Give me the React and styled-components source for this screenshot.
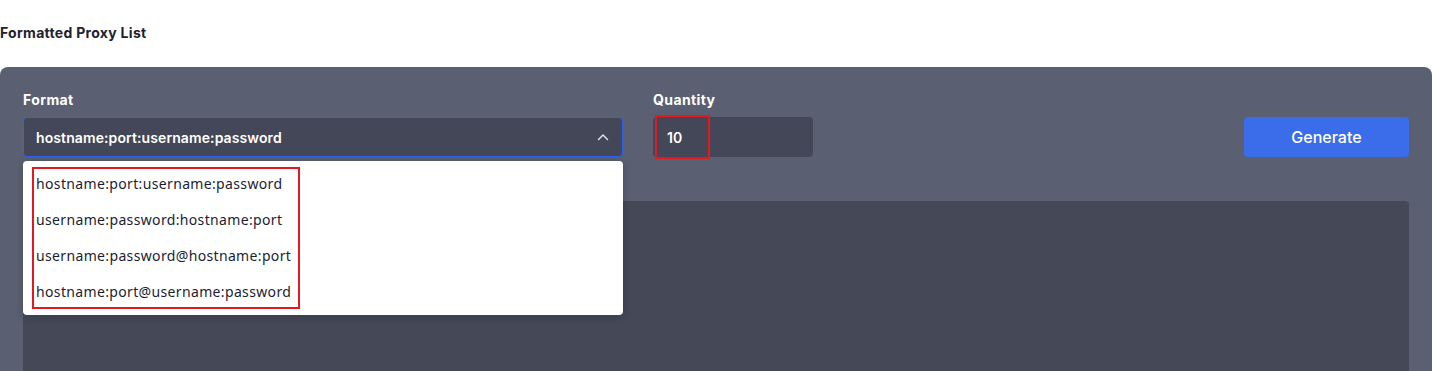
import React from 'react'
import styled, { createGlobalStyle } from 'styled-components'

const GlobalStyle = createGlobalStyle`
  html, body {
    margin: 0;
    padding: 0;
    background: #ffffff;
    font-family: Inter, "Noto Sans", sans-serif;
  }
`

const Page = styled.div`
  width: 1432px;
  height: 371px;
  overflow: hidden;
`

const PageTitle = styled.h2`
  margin: 0;
  padding: 24px 0 0 0;
  height: 67px;
  box-sizing: border-box;
  font-size: 14px;
  font-weight: 700;
  color: #1d2230;
  letter-spacing: 0.3px;
`

const Panel = styled.div`
  background: #5a5f71;
  border-radius: 8px;
  padding: 24px 23px 0 23px;
  height: 340px;
  box-sizing: border-box;
`

const Controls = styled.div`
  display: flex;
  align-items: flex-end;
`

const Field = styled.div`
  display: flex;
  flex-direction: column;
  gap: 9px;
  width: ${(p) => p.width}px;
  margin-right: ${(p) => p.gap || 0}px;
  position: relative;
`

const Label = styled.label`
  font-size: 14px;
  font-weight: 700;
  color: #ffffff;
  line-height: 17px;
  letter-spacing: 0.4px;
`

const Select = styled.div`
  height: 40px;
  box-sizing: border-box;
  border: 1px solid #2d62f0;
  border-radius: 4px;
  background: #434757;
  display: flex;
  align-items: center;
  justify-content: space-between;
  padding: 0 13px 0 12px;
  color: #ffffff;
  font-size: 14px;
  font-weight: 600;
  letter-spacing: 0.1px;
`

const Input = styled.div`
  height: 40px;
  box-sizing: border-box;
  border-radius: 4px;
  background: #434757;
  display: flex;
  align-items: center;
  padding: 0 14px;
  color: #ffffff;
  font-size: 14px;
  font-weight: 600;
  position: relative;
`

const Menu = styled.ul`
  position: absolute;
  left: 0;
  right: 0;
  top: 70px;
  margin: 0;
  padding: 4px 0 6px 0;
  list-style: none;
  background: #ffffff;
  border-radius: 4px;
  box-shadow: 0 2px 8px rgba(0, 0, 0, 0.18);
  z-index: 5;
`

const MenuItem = styled.li`
  height: 36px;
  display: flex;
  align-items: center;
  padding: 0 13px;
  font-family: "Noto Sans", sans-serif;
  font-size: 14px;
  letter-spacing: 0.35px;
  color: #1a1d33;
`

const Highlight = styled.div`
  position: absolute;
  border: 2px solid #e3191f;
  pointer-events: none;
`

const Spacer = styled.div`
  flex: 1;
`

const GenerateButton = styled.button`
  width: 165px;
  height: 40px;
  border: none;
  border-radius: 4px;
  background: #3b6ce9;
  color: #ffffff;
  font-family: Inter, "Noto Sans", sans-serif;
  font-size: 16px;
  font-weight: 500;
`

const Output = styled.div`
  margin-top: 44px;
  height: 200px;
  background: #444857;
  border-radius: 4px;
`

const formats = [
  'hostname:port:username:password',
  'username:password:hostname:port',
  'username:password@hostname:port',
  'hostname:port@username:password',
]

function ChevronUp() {
  return (
    <svg width="12" height="8" viewBox="0 0 12 8" fill="none">
      <path d="M1.5 6.5L6 2L10.5 6.5" stroke="#e8e9ee" strokeWidth="1.4" strokeLinecap="round" strokeLinejoin="round" />
    </svg>
  )
}

export default function App() {
  return (
    <Page>
      <GlobalStyle />
      <PageTitle>Formatted Proxy List</PageTitle>
      <Panel>
        <Controls>
          <Field width={600} gap={30}>
            <Label>Format</Label>
            <Select>
              <span>{formats[0]}</span>
              <ChevronUp />
            </Select>
            <Menu>
              {formats.map((f) => (
                <MenuItem key={f}>{f}</MenuItem>
              ))}
              <Highlight style={{ left: 9, top: 6, width: 264, height: 138 }} />
            </Menu>
          </Field>
          <Field width={160}>
            <Label>Quantity</Label>
            <Input>
              10
              <Highlight style={{ left: 2, top: -2, width: 51, height: 40 }} />
            </Input>
          </Field>
          <Spacer />
          <GenerateButton>Generate</GenerateButton>
        </Controls>
        <Output />
      </Panel>
    </Page>
  )
}
